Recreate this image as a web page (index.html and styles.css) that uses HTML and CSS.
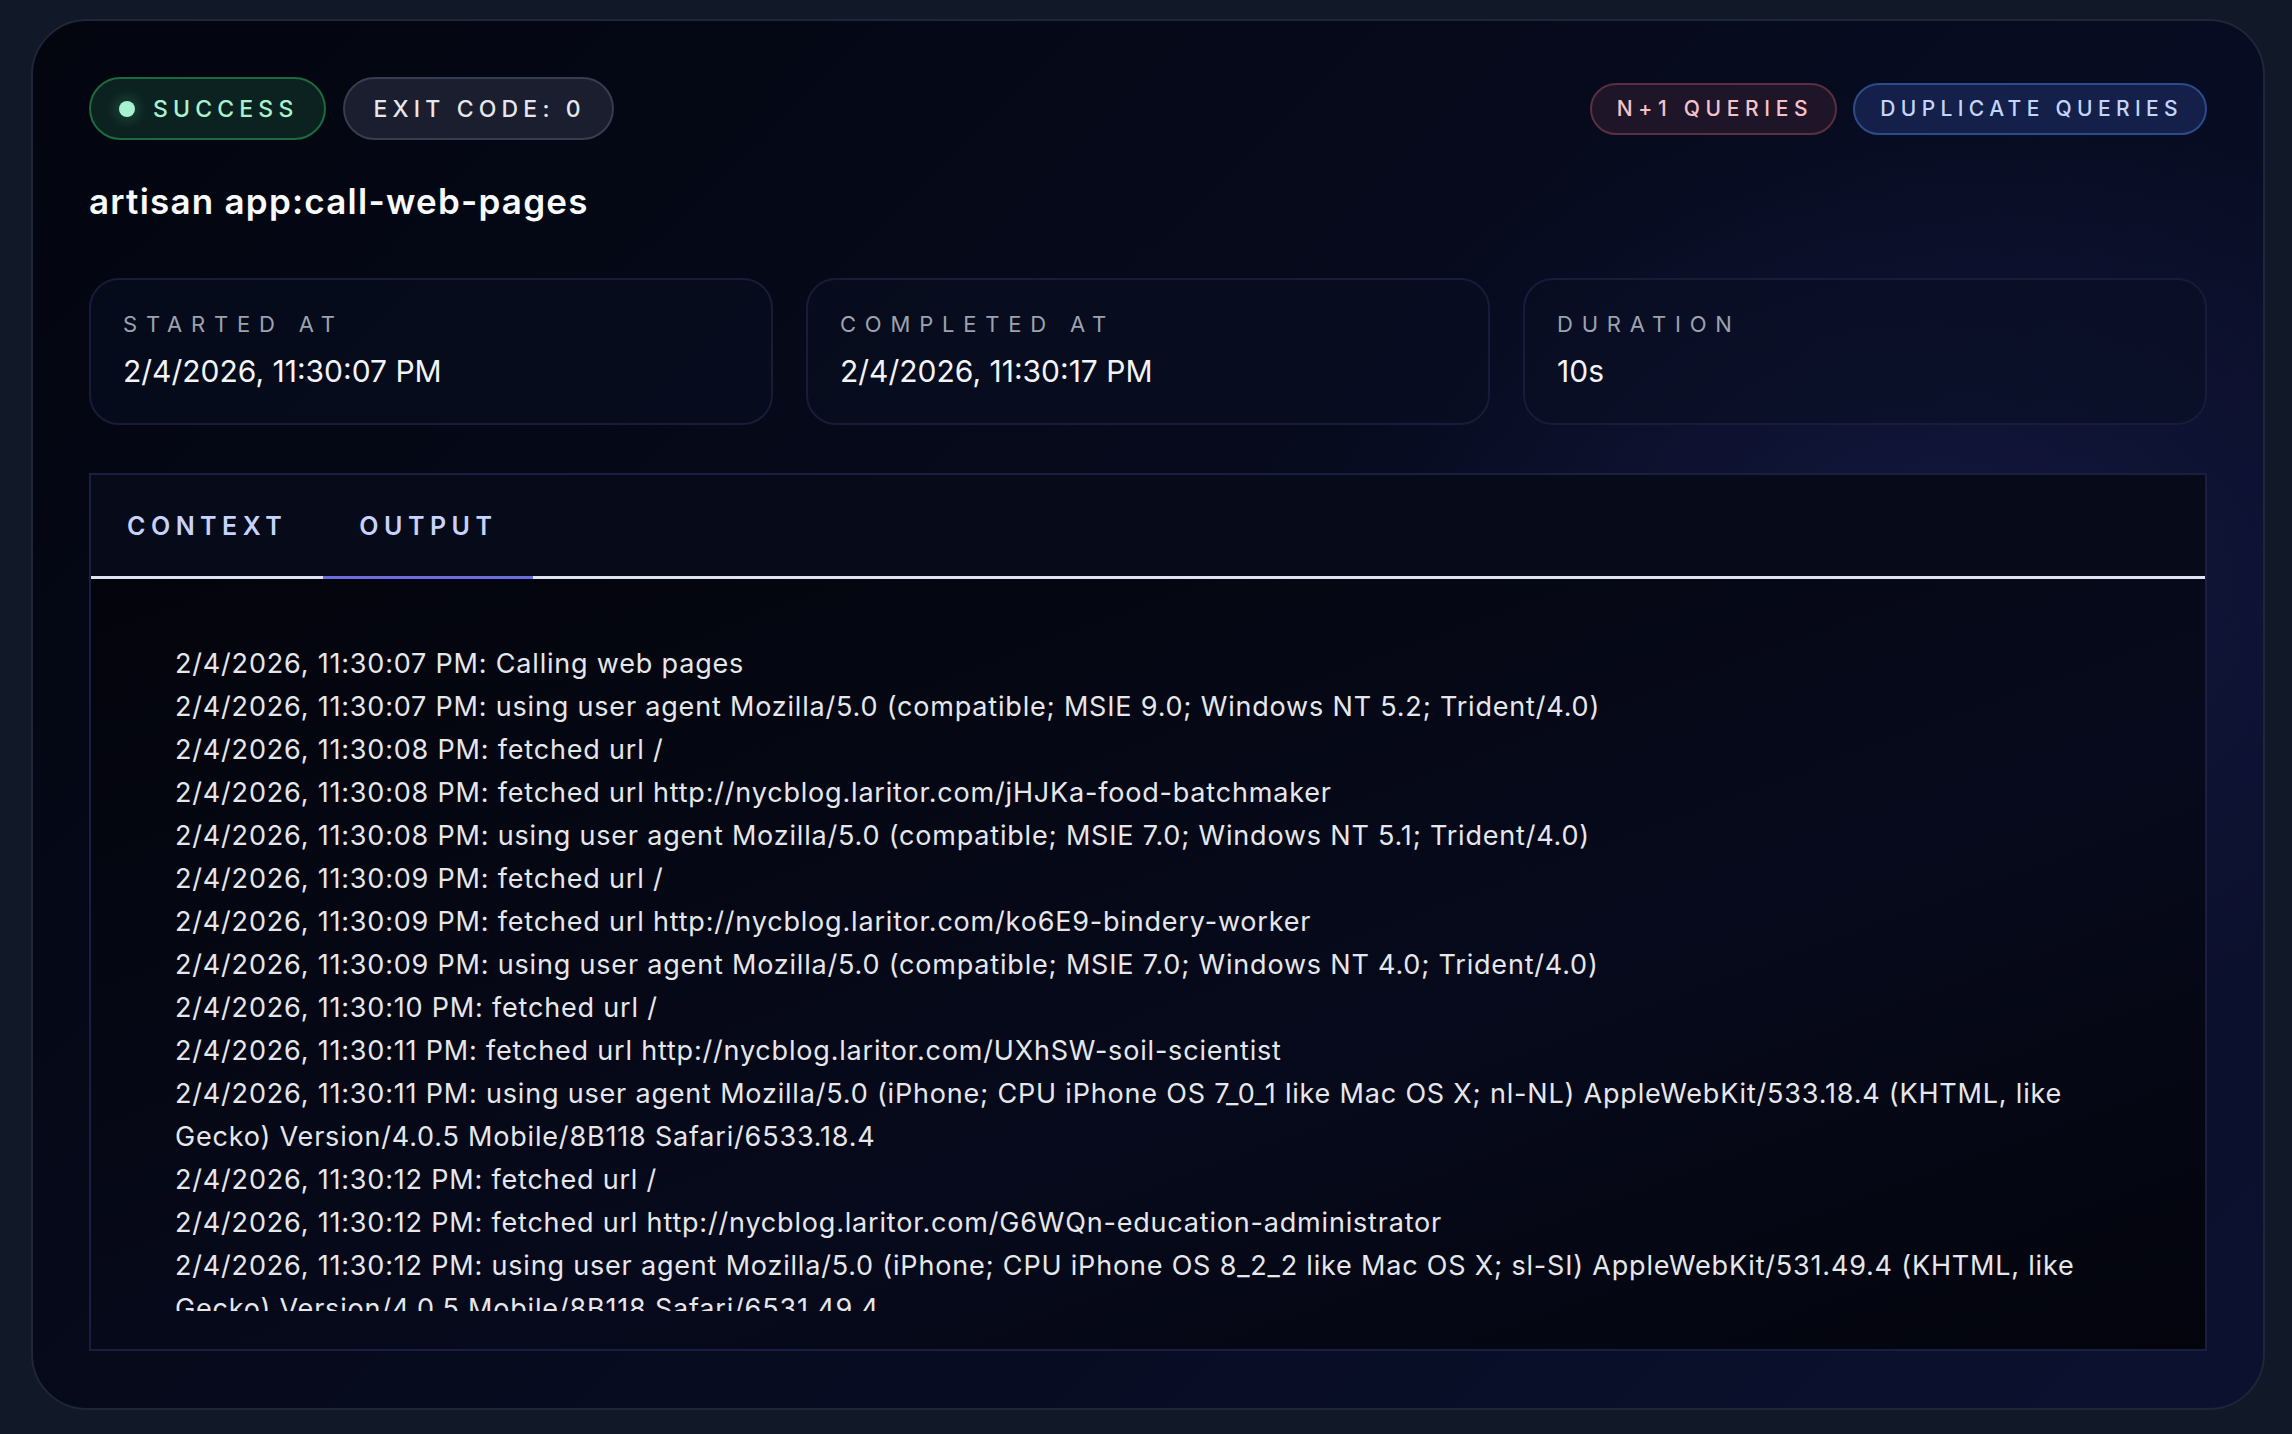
FILE: index.html
```html
<!DOCTYPE html>
<html lang="en">
<head>
<meta charset="utf-8">
<title>artisan app:call-web-pages</title>
<link rel="stylesheet" href="styles.css">
</head>
<body>
<main class="card">
  <header class="header">
    <div class="pills">
      <span class="pill pill-success"><span class="dot"></span>SUCCESS</span>
      <span class="pill pill-exit">EXIT CODE: 0</span>
    </div>
    <div class="pills pills-right">
      <span class="tag tag-n1">N+1 QUERIES</span>
      <span class="tag tag-dup">DUPLICATE QUERIES</span>
    </div>
  </header>

  <h1 class="title">artisan app:call-web-pages</h1>

  <section class="stats">
    <div class="stat">
      <div class="stat-label">STARTED AT</div>
      <div class="stat-value">2/4/2026, 11:30:07 PM</div>
    </div>
    <div class="stat">
      <div class="stat-label">COMPLETED AT</div>
      <div class="stat-value">2/4/2026, 11:30:17 PM</div>
    </div>
    <div class="stat">
      <div class="stat-label">DURATION</div>
      <div class="stat-value">10s</div>
    </div>
  </section>

  <section class="panel">
    <nav class="tabs">
      <span class="tab">CONTEXT</span>
      <span class="tab tab-active">OUTPUT</span>
    </nav>
    <div class="panel-body">
      <div class="log">
        <div>2/4/2026, 11:30:07 PM: Calling web pages</div>
        <div>2/4/2026, 11:30:07 PM: using user agent Mozilla/5.0 (compatible; MSIE 9.0; Windows NT 5.2; Trident/4.0)</div>
        <div>2/4/2026, 11:30:08 PM: fetched url /</div>
        <div>2/4/2026, 11:30:08 PM: fetched url http://nycblog.laritor.com/jHJKa-food-batchmaker</div>
        <div>2/4/2026, 11:30:08 PM: using user agent Mozilla/5.0 (compatible; MSIE 7.0; Windows NT 5.1; Trident/4.0)</div>
        <div>2/4/2026, 11:30:09 PM: fetched url /</div>
        <div>2/4/2026, 11:30:09 PM: fetched url http://nycblog.laritor.com/ko6E9-bindery-worker</div>
        <div>2/4/2026, 11:30:09 PM: using user agent Mozilla/5.0 (compatible; MSIE 7.0; Windows NT 4.0; Trident/4.0)</div>
        <div>2/4/2026, 11:30:10 PM: fetched url /</div>
        <div>2/4/2026, 11:30:11 PM: fetched url http://nycblog.laritor.com/UXhSW-soil-scientist</div>
        <div>2/4/2026, 11:30:11 PM: using user agent Mozilla/5.0 (iPhone; CPU iPhone OS 7_0_1 like Mac OS X; nl-NL) AppleWebKit/533.18.4 (KHTML, like Gecko) Version/4.0.5 Mobile/8B118 Safari/6533.18.4</div>
        <div>2/4/2026, 11:30:12 PM: fetched url /</div>
        <div>2/4/2026, 11:30:12 PM: fetched url http://nycblog.laritor.com/G6WQn-education-administrator</div>
        <div>2/4/2026, 11:30:12 PM: using user agent Mozilla/5.0 (iPhone; CPU iPhone OS 8_2_2 like Mac OS X; sl-SI) AppleWebKit/531.49.4 (KHTML, like Gecko) Version/4.0.5 Mobile/8B118 Safari/6531.49.4</div>
        <div>2/4/2026, 11:30:13 PM: fetched url /</div>
        <div>2/4/2026, 11:30:13 PM: fetched url http://nycblog.laritor.com/quality-assurance</div>
      </div>
    </div>
  </section>
</main>
</body>
</html>
```

FILE: styles.css
```css
* { box-sizing: border-box; }

html, body {
  margin: 0;
  padding: 0;
  background: #111827;
}

body {
  padding: 19px 27px 26px 31px;
  font-family: Inter, "Liberation Sans", sans-serif;
  color: #f3f4f6;
}

.card {
  position: relative;
  border: 2px solid #1f2637;
  border-radius: 56px;
  padding: 56px 56px 57px 56px;
  background:
    radial-gradient(ellipse 900px 700px at 85% 40%, rgba(40, 42, 110, 0.35), rgba(40, 42, 110, 0) 70%),
    linear-gradient(135deg, #03060f 0%, #060a1c 45%, #0c1130 100%);
  overflow: hidden;
}

.header {
  display: flex;
  justify-content: space-between;
  align-items: center;
  height: 63px;
}

.pills {
  display: flex;
  align-items: center;
  gap: 17px;
}

.pills-right {
  gap: 16px;
}

.pill {
  display: inline-flex;
  align-items: center;
  height: 63px;
  padding: 0 26px 0 28px;
  border-radius: 999px;
  font-size: 23px;
  font-weight: 500;
  letter-spacing: 0.225em;
  border: 2px solid;
}

.pill-success {
  background: #0c2220;
  border-color: #1c6a3e;
  color: #a7f3d0;
}

.dot {
  width: 16px;
  height: 16px;
  border-radius: 50%;
  background: #a7f3d0;
  margin-right: 18px;
  box-shadow: 0 0 10px 6px rgba(110, 231, 183, 0.12);
}

.pill-exit {
  background: #1a1e2e;
  border-color: #373c50;
  color: #e5e7eb;
}

.tag {
  display: inline-flex;
  align-items: center;
  height: 52px;
  padding: 0 22px 0 25px;
  border-radius: 999px;
  font-size: 21px;
  font-weight: 500;
  letter-spacing: 0.27em;
  border: 2px solid;
}

.tag-n1 {
  background: #1f1529;
  border-color: #5a2f40;
  color: #f5c2c7;
}

.tag-dup {
  background: #14204a;
  border-color: #2d4a8b;
  color: #c3d5fb;
  letter-spacing: 0.255em;
}

.title {
  margin: 41px 0 0;
  font-size: 35px;
  line-height: 41px;
  font-weight: 600;
  color: #f9fafb;
  letter-spacing: 0.035em;
}

.stats {
  display: grid;
  grid-template-columns: repeat(3, 1fr);
  gap: 33px;
  margin-top: 56px;
}

.stat {
  height: 147px;
  border: 2px solid #181c3a;
  border-radius: 30px;
  background: rgba(10, 14, 34, 0.55);
  padding: 29px 32px 0;
}

.stat-label {
  font-size: 22px;
  line-height: 30px;
  letter-spacing: 0.4em;
  color: #9ca3af;
}

.stat-value {
  margin-top: 13px;
  font-size: 30px;
  line-height: 38px;
  color: #f3f4f6;
}

.panel {
  margin-top: 48px;
  border: 2px solid #1a1e40;
  background: #03040c;
}

.tabs {
  display: flex;
  background: #060a19;
  border-bottom: 3px solid #dfe3f1;
  height: 104px;
}

.tab {
  display: flex;
  align-items: center;
  padding: 0 36px 0 36px;
  font-size: 25px;
  font-weight: 600;
  letter-spacing: 0.22em;
  color: #c7d2fe;
  margin-bottom: -3px;
  border-bottom: 3px solid transparent;
}

.tab-active {
  border-bottom-color: #6a6ee0;
}

.panel-body {
  padding: 38px 38px 38px 38px;
  background: linear-gradient(160deg, #03040b 0%, #070a1c 60%, #03040c 100%);
}

.log {
  height: 694px;
  overflow: hidden;
  padding: 25px 46px 0 46px;
  font-size: 27px;
  line-height: 43px;
  letter-spacing: 0.03em;
  color: #e5e7eb;
}
```
